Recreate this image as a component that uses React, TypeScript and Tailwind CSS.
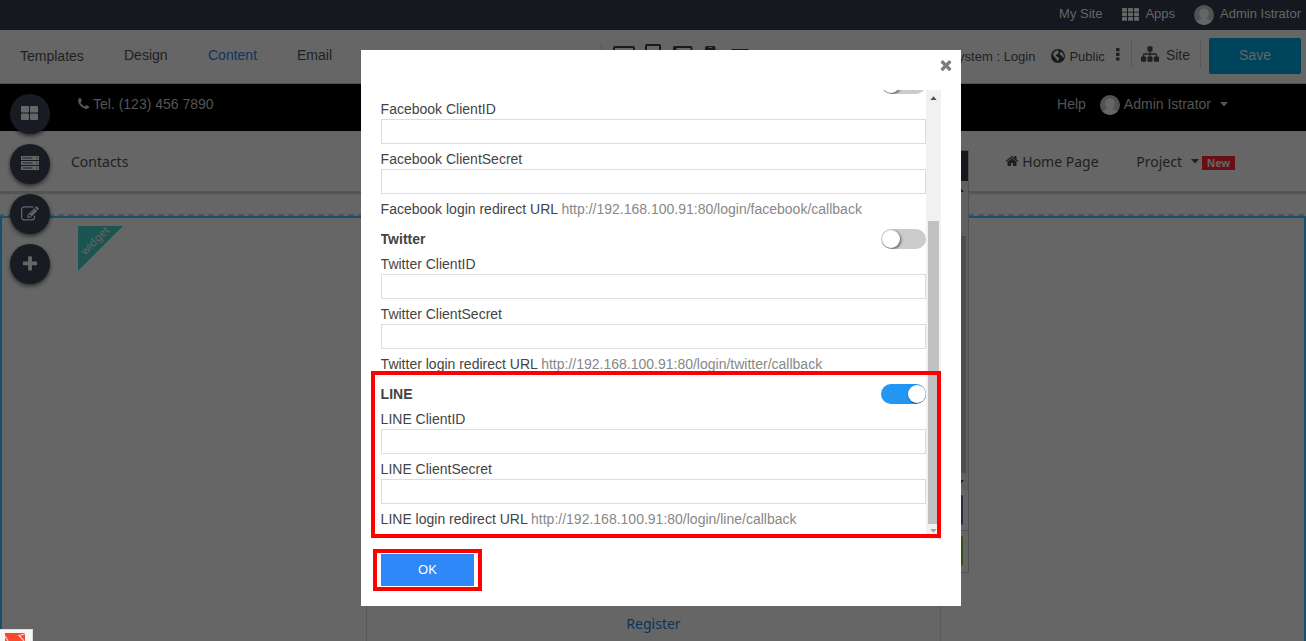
import React from "react";

const PATHS = {
  phone:
    "M1408 1240q0 27-10 70.5t-21 68.5q-21 50-122 106-94 51-186 51-27 0-53-3.5t-57.5-12.5-47-14.5-55.5-20.5-49-18q-98-35-175-83-127-79-264-216t-216-264q-48-77-83-175-3-9-18-49t-20.5-55.5-14.5-47-12.5-57.5-3.5-53q0-92 51-186 56-101 106-122 25-11 68.5-21t70.5-10q14 0 21 3 18 6 53 76 11 19 30 54t35 63.5 31 53.5q3 4 17.5 25t21.5 35.5 7 28.5q0 20-28.5 50t-62 55-62 53-28.5 46q0 9 5 22.5t8.5 20.5 14 24 11.5 19q76 137 174 235t235 174q2 1 19 11.5t24 14 20.5 8.5 22.5 5q18 0 46-28.5t53-62 55-62 50-28.5q14 0 28.5 7t35.5 21.5 25 17.5q25 15 53.5 31t63.5 35 54 30q70 35 76 53 3 7 3 21z",
  home:
    "M1472 992v480q0 26-19 45t-45 19h-384v-384h-256v384h-384q-26 0-45-19t-19-45v-480q0-1 .5-3t.5-3l575-474 575 474q1 2 1 6zm223-69l-62 74q-8 9-21 11h-3q-13 0-21-7l-692-577-692 577q-12 8-24 7-13-2-21-11l-62-74q-8-10-7-23.5t11-21.5l719-599q32-26 76-26t76 26l244 204v-195q0-14 9-23t23-9h192q14 0 23 9t9 23v408l219 182q10 8 11 21.5t-7 23.5z",
  sitemap:
    "M1792 1248v320q0 40-28 68t-68 28h-320q-40 0-68-28t-28-68v-320q0-40 28-68t68-28h96v-192h-512v192h96q40 0 68 28t28 68v320q0 40-28 68t-68 28h-320q-40 0-68-28t-28-68v-320q0-40 28-68t68-28h96v-192h-512v192h96q40 0 68 28t28 68v320q0 40-28 68t-68 28h-320q-40 0-68-28t-28-68v-320q0-40 28-68t68-28h96v-192q0-52 38-90t90-38h512v-192h-96q-40 0-68-28t-28-68v-320q0-40 28-68t68-28h320q40 0 68 28t28 68v320q0 40-28 68t-68 28h-96v192h512q52 0 90 38t38 90v192h96q40 0 68 28t28 68z",
  times:
    "M1490 1322q0 40-28 68l-136 136q-28 28-68 28t-68-28l-294-294-294 294q-28 28-68 28t-68-28l-136-136q-28-28-28-68t28-68l294-294-294-294q-28-28-28-68t28-68l136-136q28-28 68-28t68 28l294 294 294-294q28-28 68-28t68 28l136 136q28 28 28 68t-28 68l-294 294 294 294q28 28 28 68z",
  plus:
    "M1600 736v192q0 40-28 68t-68 28h-416v416q0 40-28 68t-68 28h-192q-40 0-68-28t-28-68v-416h-416q-40 0-68-28t-28-68v-192q0-40 28-68t68-28h416v-416q0-40 28-68t68-28h192q40 0 68 28t28 68v416h416q40 0 68 28t28 68z",
  edit:
    "M888 1184l116-116-152-152-116 116v56h96v96h56zm440-720q-16-16-33 1l-350 350q-17 17-1 33t33-1l350-350q17-17 1-33zm80 594v190q0 119-84.5 203.5t-203.5 84.5h-832q-119 0-203.5-84.5t-84.5-203.5v-832q0-119 84.5-203.5t203.5-84.5h832q63 0 117 25 15 7 18 23 3 17-9 29l-49 49q-14 14-32 8-23-6-45-6h-832q-66 0-113 47t-47 113v832q0 66 47 113t113 47h832q66 0 113-47t47-113v-126q0-13 9-22l64-64q15-15 35-7t20 29zm-96-738l288 288-672 672h-288v-288zm444 132l-92 92-288-288 92-92q28-28 68-28t68 28l152 152q28 28 28 68t-28 68z",
};

function Glyph({ name, className }: { name: keyof typeof PATHS; className: string }) {
  return (
    <svg viewBox="0 0 1792 1792" fill="currentColor" className={`shrink-0 ${className}`}>
      <path d={PATHS[name]} />
    </svg>
  );
}

function Globe({ className }: { className: string }) {
  return (
    <svg viewBox="0 0 14 14" className={`size-[14px] shrink-0 ${className}`}>
      <circle cx="7" cy="7" r="7" fill="#1a1a1a" />
      <path
        fill="#666"
        d="M5.400 1.600L7.600 1.300 7 2.600 8.200 3.400 6.600 5 5 5.800 4.800 7 6.400 7.800 8.400 9.200 7.600 10.800 6.400 12.600 5.800 10.600 4.600 9 3 7.400 2 5.200 3.200 3z"
      />
      <path fill="#666" d="M9.400 2.200l2.200 1.600 1.200 2.600-.2 2.400-1.200-.6-.6-1.800L9 6 8.800 4.400l1-.8z" />
    </svg>
  );
}

function Avatar({ className }: { className: string }) {
  return (
    <svg viewBox="0 0 20 20" className={`size-5 shrink-0 rounded-full ${className}`}>
      <rect width="20" height="20" fill="#525252" />
      <path
        fill="#666666"
        d="M10 3.600c3 0 4.800 2 4.800 4.600 0 2-.8 3.900-2 5 .2 1 1 1.300 2.600 1.900 1.400.5 2.600 1.100 3.100 2.400V20H1.500v-2.500c.5-1.300 1.700-1.900 3.100-2.400 1.600-.6 2.400-.9 2.600-1.900-1.200-1.100-2-3-2-5C5.200 5.600 7 3.600 10 3.600z"
      />
    </svg>
  );
}

function Caret({ className = "", size = "h-[5px] w-2" }: { className?: string; size?: string }) {
  return (
    <svg viewBox="0 0 8 5" fill="currentColor" className={`shrink-0 ${size} ${className}`}>
      <path d="M0 0h8L4 4.600z" />
    </svg>
  );
}

function TopBar() {
  return (
    <header className="flex h-[30px] items-center justify-end bg-[#15191f] pr-[5px] pb-[2px] text-[13px] text-[#666]">
      <span>My Site</span>
      <svg viewBox="0 0 17 13" fill="currentColor" className="mt-[1px] ml-5 h-[13px] w-[17px]">
        {[0, 6, 12].map((x) =>
          [0, 4.500, 9].map((y) => <rect key={`${x}-${y}`} x={x} y={y} width="5" height="3.700" rx="0.600" />)
        )}
      </svg>
      <span className="ml-[6px]">Apps</span>
      <Avatar className="mt-[2px] ml-[19px]" />
      <span className="ml-[6px]">Admin Istrator</span>
    </header>
  );
}

function Devices() {
  return (
    <svg viewBox="0 0 140 20" fill="none" stroke="#1a1a1a" strokeWidth="2" className="mt-[-10px] ml-[11px] h-5 w-[140px] shrink-0">
      <rect x="1" y="5" width="20" height="14" rx="1" />
      <rect x="33" y="3" width="14" height="20" rx="1" />
      <rect x="61" y="5" width="17.500" height="14" rx="1" />
      <path d="M62 5v15" strokeWidth="3" />
      <rect x="93" y="5" width="8.500" height="15" rx="1" fill="#1a1a1a" />
      <path d="M95.500 5.500h3.500" stroke="#555" strokeWidth="1" />
      <path d="M118.500 8h17" />
    </svg>
  );
}

function Toolbar() {
  return (
    <div className="flex h-[54px] items-center border-b border-[#515151] bg-[#666] text-[14px] whitespace-nowrap text-[#1f1f1f]">
      <nav className="flex w-[601px] shrink-0 pb-[1px] pl-5">
        <span className="w-[104px] pt-[1px]">Templates</span>
        <span className="w-[84px]">Design</span>
        <span className="w-[89px] text-[#083562]">Content</span>
        <span>Email</span>
      </nav>
      <span className="h-7 w-px bg-[#575757]" />
      <Devices />
      <div className="flex flex-1 items-center justify-end pr-[5px]">
        <span className="pt-[1px] text-[13px]">System : Login</span>
        <Globe className="mb-[2px] ml-4" />
        <span className="ml-1 pt-[1px] text-[13px]">Public</span>
        <svg viewBox="0 0 4 13" fill="currentColor" className="mr-[11px] mb-[4px] ml-[11px] h-[13px] w-1">
          <rect width="3.500" height="3.200" rx="0.500" />
          <rect y="4.700" width="3.500" height="3.200" rx="0.500" />
          <rect y="9.400" width="3.500" height="3.200" rx="0.500" />
        </svg>
        <span className="mb-[5px] h-7 w-px bg-[#575757]" />
        <Glyph name="sitemap" className="mb-[5px] ml-[9px] size-[18px]" />
        <span className="ml-[7px] pb-[2px]">Site</span>
        <span className="mr-2 mb-[5px] ml-[10px] h-7 w-px bg-[#575757]" />
        <button className="mb-[2px] h-9 w-[92px] rounded-[2px] bg-[#00445c] text-[14px] text-[#666]">Save</button>
      </div>
    </div>
  );
}

function ContactBar() {
  return (
    <div className="flex h-[47px] items-center justify-between bg-black pr-[78px] pb-[6px] pl-[78px] text-[14px] text-[#555]">
      <div className="flex items-center">
        <svg viewBox="0 0 1408 1792" fill="currentColor" className="mb-[1px] h-[14px] w-[11px] shrink-0">
          <path d={PATHS.phone} />
        </svg>
        <span className="ml-1">Tel. (123) 456 7890</span>
      </div>
      <div className="flex items-center">
        <span>Help</span>
        <Avatar className="mt-[1px] ml-[14px]" />
        <span className="ml-1">Admin Istrator</span>
        <Caret className="ml-[9px]" />
      </div>
    </div>
  );
}

function SiteNav() {
  return (
    <div className="flex h-[60px] items-center justify-between bg-[#666] pr-[71px] pl-[71px] font-['Noto_Sans','Open_Sans',sans-serif] text-[14px] text-[#1f1f1f] shadow-[0_3px_1px_#555]">
      <span>Contacts</span>
      <div className="flex items-center">
        <Glyph name="home" className="size-[14px]" />
        <span className="ml-[3px] w-[114px]">Home Page</span>
        <span>Project</span>
        <Caret className="mt-[1px] ml-[9px]" />
        <span className="mt-[3px] ml-[3px] flex h-[14px] w-[33px] items-center justify-center bg-[#690f14] pt-[2px] text-[10.500px] font-bold text-[#666]">
          New
        </span>
      </div>
    </div>
  );
}

function RoundButton({ children }: { children: React.ReactNode }) {
  return (
    <div className="flex size-10 items-center justify-center rounded-full bg-[#181b21] text-[#666] shadow-[0_2px_4px_rgba(0,0,0,0.6)]">
      {children}
    </div>
  );
}

function SideTools() {
  return (
    <aside className="absolute top-[94px] left-[10px] flex flex-col gap-[10px]">
      <RoundButton>
        <svg viewBox="0 0 17 14" fill="currentColor" className="mr-[1px] mb-[2px] h-[14px] w-[17px]">
          <rect width="8" height="6.500" rx="1" />
          <rect x="9" width="8" height="6.500" rx="1" />
          <rect y="7.500" width="8" height="6.500" rx="1" />
          <rect x="9" y="7.500" width="8" height="6.500" rx="1" />
        </svg>
      </RoundButton>
      <RoundButton>
        <svg viewBox="0 0 18 14" className="mb-[2px] h-[14px] w-[18px]">
          {[0, 5, 10].map((y) => (
            <g key={y}>
              <rect y={y} width="18" height="4" fill="#666" />
              <rect x="1.500" y={y + 1.300} width="10" height="1.400" fill="#343638" />
              <rect x="15" y={y + 1.300} width="1.500" height="1.400" fill="#343638" />
            </g>
          ))}
        </svg>
      </RoundButton>
      <RoundButton>
        <Glyph name="edit" className="size-[18px]" />
      </RoundButton>
      <RoundButton>
        <Glyph name="plus" className="size-[18px]" />
      </RoundButton>
    </aside>
  );
}

function PageCanvas() {
  return (
    <main className="mt-[23px] flex flex-1 flex-col">
      <svg className="h-[2px] w-full shrink-0" preserveAspectRatio="none">
        <path d="M-2 1H1306" stroke="#525252" strokeWidth="2" strokeDasharray="6 4" />
      </svg>
      <div className="flex flex-1 border-x-2 border-t-2 border-[#15506e] bg-[#666]">
        <div className="w-[364px] shrink-0 pt-[8px] pl-[76px]">
          <svg viewBox="0 0 45 45" className="size-[45px] overflow-visible">
            <path d="M0 0h45L0 45z" fill="#1c5452" />
            <text x="17" y="18" transform="rotate(-45 17.500 14.500)" textAnchor="middle" fontSize="11" fill="#666" fontFamily="Noto Sans">
              widget
            </text>
          </svg>
        </div>
        <div className="flex w-[575px] items-end justify-center border-x border-[#5a5a5a] pb-[7px] font-['Noto_Sans','Open_Sans',sans-serif] text-[14px] text-[#0a3558]">
          Register
        </div>
      </div>
    </main>
  );
}

function SidePopup() {
  return (
    <section className="absolute top-[150px] left-[900px] flex h-[423px] w-[69px] flex-col border border-[#515151] bg-[#666]">
      <div className="h-[30px] bg-[#15191f]" />
      <div className="relative flex h-[309px] justify-end bg-[#606060] pr-[2px]">
        <span className="mt-[55px] h-[237px] w-[14px] bg-[#4d4d4d]" />
        <Caret className="absolute top-[6px] right-1 rotate-180 text-[#202020]" />
        <Caret className="absolute right-1 bottom-[5px] text-[#202020]" />
      </div>
      <div className="flex h-[41px] justify-end border-b border-[#515151] pt-[5px] pr-[5px]">
        <span className="h-[30px] w-10 rounded-[2px] bg-[#232b3e]" />
      </div>
      <div className="flex justify-end pt-[5px] pr-[5px]">
        <span className="h-[30px] w-10 rounded-[2px] bg-[#344f18]" />
      </div>
    </section>
  );
}

function Toggle({ on }: { on?: boolean }) {
  return (
    <span className={`flex h-5 w-[45px] items-center overflow-hidden rounded-full ${on ? "justify-end bg-[#2196f3]" : "bg-[#ccc] pl-px"}`}>
      <span className="size-[18px] rounded-full bg-white shadow-[1px_1px_3px_rgba(0,0,0,0.6)]" />
    </span>
  );
}

function Field({ label }: { label: string }) {
  return (
    <label className="mt-[5px] block">
      <span className="-ml-[0.4px] block h-5 leading-5">{label}</span>
      <input className="block h-[25px] w-full border border-[#ddd] bg-white" />
    </label>
  );
}

function Provider({ name, slug, on }: { name: string; slug: string; on?: boolean }) {
  return (
    <section className="mb-[10px]">
      <div className="flex h-5 items-center justify-between font-bold">
        <h3 className="-ml-[0.4px]">{name}</h3>
        <Toggle on={on} />
      </div>
      <Field label={`${name} ClientID`} />
      <Field label={`${name} ClientSecret`} />
      <p className="mt-[5px] -ml-[0.4px] h-5 leading-5">
        {name} login redirect URL <span className="text-[#888]">http://192.168.100.91:80/login/{slug}/callback</span>
      </p>
    </section>
  );
}

function Modal() {
  return (
    <div className="absolute top-[50px] left-[361px] flex h-[556px] w-[600px] flex-col bg-white pl-5 text-[14px] text-[#444]">
      <div className="flex h-10 shrink-0 items-start justify-end pt-[7px] pr-[7.500px] text-[#7d7d7d]">
        <Glyph name="times" className="size-4" />
      </div>
      <div className="flex h-[449px] w-[560px] shrink-0 overflow-hidden">
        <div className="-mt-4 w-[545px]">
          <Provider name="Facebook" slug="facebook" />
          <Provider name="Twitter" slug="twitter" />
          <Provider name="LINE" slug="line" on />
        </div>
        <div className="flex w-[15px] flex-col bg-[#f1f1f1] pl-[2px]">
          <Caret size="h-1 w-[7px]" className="mt-[6px] ml-[2px] rotate-180 text-[#505050]" />
          <span className="mt-[121px] h-[303px] w-[11px] shrink-0 bg-[#c1c1c1]" />
          <Caret size="h-1 w-[7px]" className="mt-[5px] ml-[2px] text-[#a3a3a3]" />
        </div>
      </div>
      <button className="mt-[15px] h-8 w-[93px] bg-[#2f88f7] text-[13px] text-white">OK</button>
    </div>
  );
}

export default function App() {
  return (
    <div className="relative flex h-[641px] w-full flex-col overflow-hidden bg-[#666] font-['Liberation_Sans',Arial,sans-serif]">
      <TopBar />
      <Toolbar />
      <ContactBar />
      <SiteNav />
      <PageCanvas />
      <SideTools />
      <SidePopup />
      <Modal />
      <span className="absolute top-[371px] left-[371px] h-[167px] w-[570px] border-4 border-[#f00]" />
      <span className="absolute top-[549px] left-[373px] h-[42px] w-[109px] border-4 border-[#f00]" />
      <div className="absolute bottom-0 left-0 h-3 w-[33px] border-t border-r border-[#ddd] bg-[#f7f7f7] pt-[3px] pl-[5px]">
        <svg viewBox="0 0 20 8" className="block h-2 w-5">
          <rect width="20" height="8" fill="#f9492e" />
          <path d="M0 3l3 5M20 1l-6 1.500 5 5.500" stroke="#f9d5cf" strokeWidth="1.200" fill="none" />
        </svg>
      </div>
    </div>
  );
}
